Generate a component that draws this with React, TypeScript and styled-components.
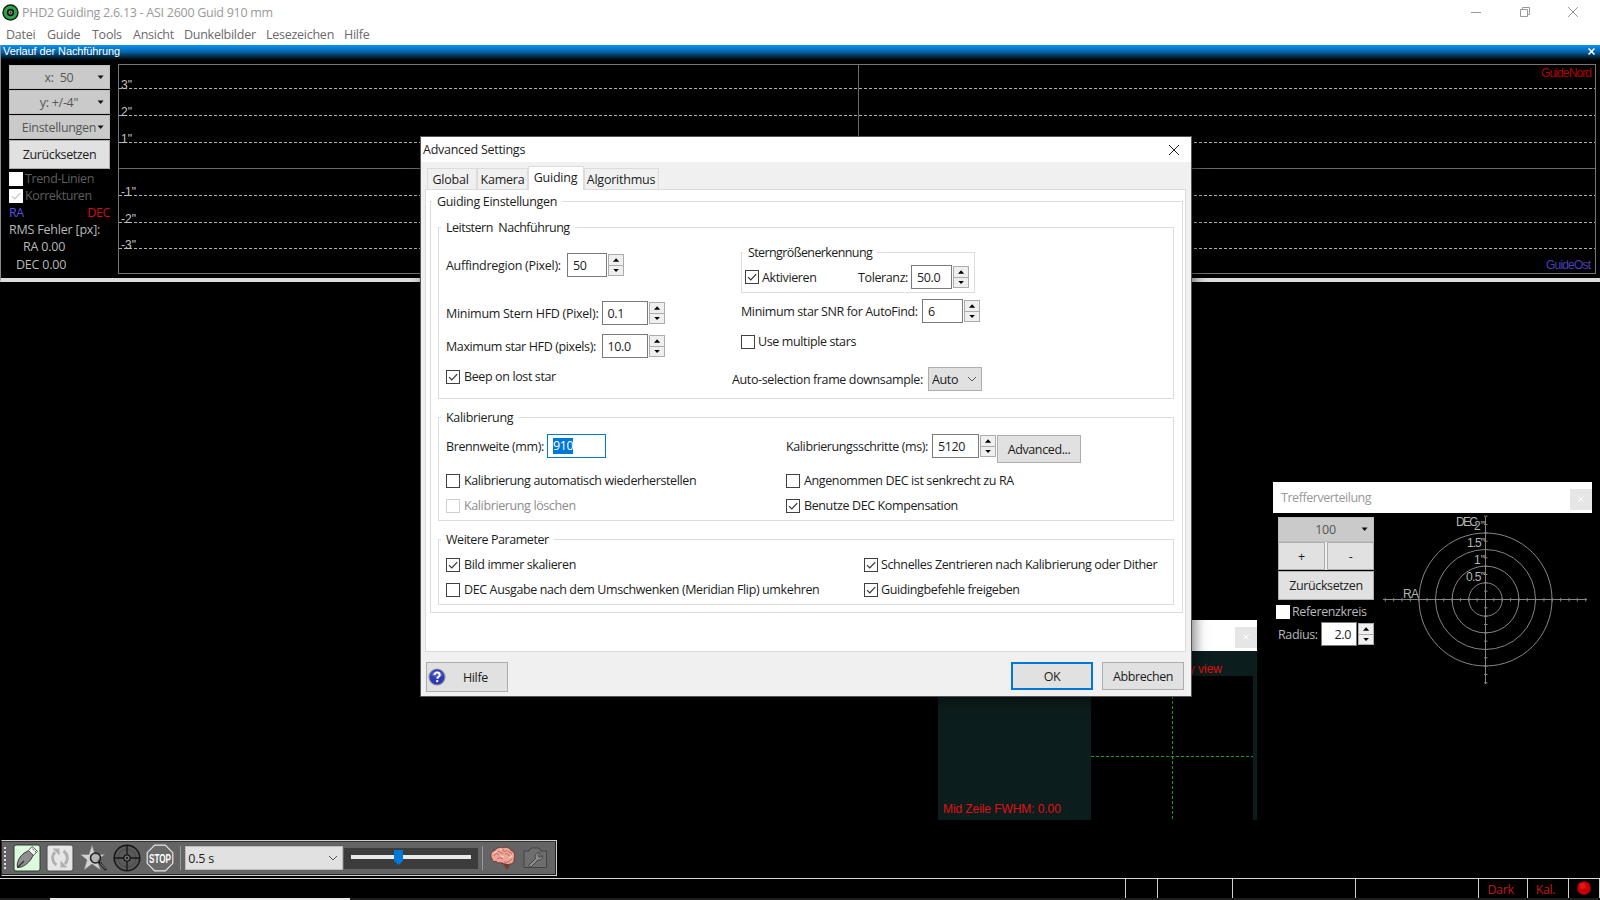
import React from "react";
import styled, { createGlobalStyle, css } from "styled-components";

const Global = createGlobalStyle`
  * { box-sizing: border-box; }
  html, body { margin: 0; background: #000; overflow: hidden; }
  body, button, input {
    font-family: "Open Sans", "Noto Sans", sans-serif;
    font-size: 12.5px;
    letter-spacing: -0.38px;
    line-height: 17px;
    color: #1c1c1c;
  }
  button { margin: 0; padding: 0; }
  svg { display: block; flex: none; }
`;

/* ---------- shared controls ---------- */

const Desktop = styled.div`
  position: relative;
  width: 1600px;
  height: 900px;
  background: #000;
  overflow: hidden;
  display: flex;
  flex-direction: column;
  white-space: pre;
`;

const Button = styled.button<{ $w: number; $h: number; $primary?: boolean }>`
  width: ${(p) => p.$w}px;
  height: ${(p) => p.$h}px;
  flex: none;
  display: flex;
  align-items: center;
  justify-content: center;
  background: #e1e1e1;
  border: ${(p) => (p.$primary ? "2px solid #0078d7" : "1px solid #adadad")};
`;

const BoxFrame = styled.span<{ $tone: "normal" | "disabled" | "bare" }>`
  width: 14px;
  height: 14px;
  flex: none;
  display: flex;
  align-items: center;
  justify-content: center;
  background: #fff;
  border: 1px solid
    ${(p) => (p.$tone === "normal" ? "#404040" : p.$tone === "disabled" ? "#d0d0d0" : "#fff")};
`;

const CheckRow = styled.label<{ $w?: number; $color?: string; $gap?: number }>`
  display: flex;
  align-items: center;
  gap: ${(p) => p.$gap ?? 4}px;
  height: 17px;
  flex: none;
  width: ${(p) => (p.$w ? p.$w + "px" : "auto")};
  color: ${(p) => p.$color ?? "inherit"};
`;

type CheckProps = {
  text: string;
  on?: boolean;
  w?: number;
  color?: string;
  gap?: number;
  tone?: "normal" | "disabled" | "bare";
};

function Check({ text, on, w, color, gap, tone = "normal" }: CheckProps) {
  return (
    <CheckRow $w={w} $color={color} $gap={gap}>
      <BoxFrame $tone={tone}>
        {on && (
          <svg width="12" height="12" viewBox="0 0 12 12">
            <path d="M2 6.2 4.8 9 10.2 3.2" fill="none" stroke={tone === "normal" ? "#333" : "#c4c4c4"} strokeWidth="1.2" />
          </svg>
        )}
      </BoxFrame>
      {text}
    </CheckRow>
  );
}

const SpinWrap = styled.span`
  display: flex;
  align-items: center;
  gap: 1px;
  flex: none;
`;

const Field = styled.span<{ $w: number; $focus?: boolean; $right?: boolean }>`
  width: ${(p) => p.$w}px;
  height: 24px;
  display: flex;
  align-items: center;
  padding: 0 5px;
  background: #fff;
  border: 1px solid ${(p) => (p.$focus ? "#0078d7" : "#7a7a7a")};
  ${(p) =>
    p.$right &&
    css`
      justify-content: flex-end;
    `}
`;

const Arrows = styled.span`
  width: 16px;
  height: 22px;
  display: grid;
  grid-template-rows: 1fr 1fr;
  background: #efefef;
  border: 1px solid #acacac;

  svg {
    place-self: center;
  }
  svg + svg {
    width: 14px;
    height: 10px;
    border-top: 1px solid #acacac;
  }
`;

function Spin({ value, w, right }: { value: string; w: number; right?: boolean }) {
  return (
    <SpinWrap>
      <Field $w={w} $right={right}>{value}</Field>
      <Arrows>
        <svg width="14" height="10" viewBox="0 0 14 10"><path d="M4 6.8h6.2L7.1 3.2z" fill="#000" /></svg>
        <svg viewBox="0 0 14 10"><path d="M4 3.2h6.2L7.1 6.8z" fill="#000" /></svg>
      </Arrows>
    </SpinWrap>
  );
}

const DropButton = styled.button<{ $h: number }>`
  height: ${(p) => p.$h}px;
  flex: none;
  display: grid;
  grid-template-columns: 1fr 12px;
  align-items: center;
  padding-left: 11px;
  background: #cacaca;
  border: 1px solid #bdbdbd;
  color: #565656;
  letter-spacing: -0.3px;
`;

const Caret = () => (
  <svg width="8" height="5" viewBox="0 0 8 5"><path d="M.6.6h6L3.6 4z" fill="#111" /></svg>
);

/* ---------- main window ---------- */

const TitleBar = styled.header`
  height: 24px;
  flex: none;
  background: #fff;
  color: #999;
  display: flex;
  align-items: center;
  gap: 3px;
  padding-left: 2px;
  letter-spacing: -0.27px;
`;

const WindowControls = styled.div`
  margin-left: auto;
  padding-right: 21px;
  display: flex;
  gap: 36.5px;
`;

const MenuBar = styled.nav`
  height: 21px;
  flex: none;
  background: #fff;
  color: #6a6a6a;
  display: flex;
  align-items: center;
  padding: 0 0 1px 6px;
  letter-spacing: -0.26px;
`;

const MenuItem = styled.span<{ $w: number }>`
  width: ${(p) => p.$w}px;
`;

const HistoryPanel = styled.section`
  height: 237px;
  flex: none;
  display: flex;
  flex-direction: column;
  border-left: 1px solid #8a8a8a;
  border-bottom: 4px solid #dcdcdc;
`;

const PanelCaption = styled.div`
  height: 15px;
  flex: none;
  display: flex;
  align-items: center;
  justify-content: space-between;
  padding: 0 5px 2px 2px;
  color: #fff;
  background: linear-gradient(#0b93f5, #0564a8 45%, #000);
  font: 11px/13px "Liberation Sans", sans-serif;
  letter-spacing: -0.1px;
`;

const PanelBody = styled.div`
  flex: 1;
  min-height: 0;
  display: flex;
  padding-top: 4px;
`;

const HistoryControls = styled.div`
  width: 117px;
  height: 213px;
  padding: 1px 8px 0;
  display: flex;
  flex-direction: column;
  overflow: hidden;
  color: #b9b9b9;

  ${DropButton} { margin-bottom: 1px; }
`;

const CheckSpace = styled.div`
  display: flex;
  flex-direction: column;
  margin-top: 1px;
`;

const AxisNames = styled.div`
  display: flex;
  justify-content: space-between;
  height: 17px;
  flex: none;
`;

const AxisName = styled.span<{ $c: string }>`
  color: ${(p) => p.$c};
`;

const Stat = styled.div<{ $indent: number }>`
  height: 17.4px;
  flex: none;
  padding-left: ${(p) => p.$indent}px;
  letter-spacing: -0.2px;
`;

const ChartText = styled.text`
  font-family: "Liberation Sans", sans-serif;
  font-size: 12px;
  letter-spacing: 0;
`;

const GRID: [number, string][] = [
  [24.5, '3"'],
  [51.5, '2"'],
  [78.5, '1"'],
  [131.5, '-1"'],
  [158.5, '-2"'],
  [184.5, '-3"'],
];

function HistoryChart() {
  return (
    <svg width="1478" height="211" viewBox="0 0 1478 211">
      <rect x=".5" y=".5" width="1477" height="209" fill="none" stroke="#757575" />
      <path d="M1 104.5H1477M740.5 1V209" stroke="#6a6a6a" />
      {GRID.map(([y, label]) => (
        <g key={label}>
          <path d={`M1 ${y}H1477`} stroke="#b0b0b0" strokeDasharray="3 2" />
          <ChartText x="3" y={y + 0.5} fill="#c4c4c4">{label}</ChartText>
        </g>
      ))}
      <ChartText x="1474" y="13" textAnchor="end" fill="#b00000" textLength="51">GuideNord</ChartText>
      <ChartText x="1473" y="205" textAnchor="end" fill="#4a3fb8" textLength="45">GuideOst</ChartText>
    </svg>
  );
}

/* ---------- settings dialog ---------- */

const Dialog = styled.section`
  position: absolute;
  left: 420px;
  top: 136px;
  width: 772px;
  height: 561px;
  display: flex;
  flex-direction: column;
  background: #f0f0f0;
  border: 1px solid #555;
  box-shadow: 3px 3px 12px rgba(0, 0, 0, 0.5);
`;

const DialogTitle = styled.header`
  height: 25px;
  flex: none;
  display: flex;
  align-items: center;
  justify-content: space-between;
  padding: 0 11px 0 2px;
  background: #fff;
  letter-spacing: -0.27px;
`;

const Tabs = styled.div`
  height: 27px;
  flex: none;
  display: flex;
  align-items: flex-end;
  padding-left: 6px;
`;

const Tab = styled.span<{ $w: number; $active?: boolean; $pr?: number }>`
  width: ${(p) => p.$w}px;
  height: 21px;
  display: flex;
  align-items: center;
  justify-content: center;
  padding-right: ${(p) => p.$pr ?? 0}px;
  letter-spacing: -0.22px;
  background: #f0f0f0;
  border: 1px solid #dcdcdc;
  border-bottom: 0;
  ${(p) =>
    p.$active &&
    css`
      position: relative;
      margin-bottom: -1px;
      height: 24px;
      padding-bottom: 2px;
      background: #fff;
    `}
`;

const Page = styled.div`
  width: 761px;
  height: 463px;
  margin-left: 4px;
  flex: none;
  padding: 2px 3px 0 4px;
  background: #fff;
  border: 1px solid #dcdcdc;
`;

const Group = styled.fieldset<{ $w: number; $h: number; $mt?: number; $pl?: number }>`
  width: ${(p) => p.$w}px;
  height: ${(p) => p.$h}px;
  min-width: 0;
  margin: ${(p) => p.$mt ?? 0}px 0 0;
  padding: 0 0 0 ${(p) => p.$pl ?? 7}px;
  border: 1px solid #dcdcdc;
`;

const Legend = styled.legend<{ $outdent?: number; $tight?: number }>`
  height: 18px;
  line-height: 19px;
  margin-left: ${(p) => -(p.$outdent ?? 5)}px;
  padding: 0 5px;
  letter-spacing: ${(p) => -(p.$tight ?? 0.32)}px;
`;

const Columns = styled.div`
  display: flex;
`;

const Column = styled.div<{ $w?: number }>`
  width: ${(p) => (p.$w ? p.$w + "px" : "auto")};
  flex: none;
  display: flex;
  flex-direction: column;
`;

const Row = styled.div<{ $mt: number; $indent?: number }>`
  display: flex;
  align-items: center;
  flex: none;
  margin-top: ${(p) => p.$mt}px;
  margin-left: ${(p) => p.$indent ?? 0}px;
`;

const Label = styled.span<{ $w: number; $loose?: boolean }>`
  width: ${(p) => p.$w}px;
  flex: none;
  ${(p) =>
    p.$loose &&
    css`
      letter-spacing: -0.28px;
    `}
`;

const Selected = styled.span`
  background: #0078d7;
  color: #fff;
  line-height: 16px;
`;

const Combo = styled.button`
  width: 54px;
  height: 24px;
  display: flex;
  align-items: center;
  justify-content: space-between;
  padding: 0 4px 0 3px;
  background: #e1e1e1;
  border: 1px solid #adadad;
`;

const Chevron = () => (
  <svg width="10" height="6" viewBox="0 0 10 6"><path d="M1 1l4 4 4-4" fill="none" stroke="#555" /></svg>
);

const AdvancedSlot = styled.span`
  height: 24px;
  margin-left: 1px;
  padding-top: 1px;
`;

const DialogFooter = styled.footer`
  display: flex;
  align-items: flex-start;
  padding: 10px 7px 0 5px;
  gap: 9px;
`;

const HelpButton = styled.button`
  width: 82px;
  height: 30px;
  margin-right: auto;
  display: flex;
  align-items: center;
  gap: 17px;
  padding-left: 1px;
  background: #e1e1e1;
  border: 1px solid #adadad;
`;

function SettingsDialog() {
  return (
    <Dialog>
      <DialogTitle>
        Advanced Settings
        <svg width="12" height="12" viewBox="0 0 12 12"><path d="M1 1l10 10M11 1L1 11" stroke="#222" /></svg>
      </DialogTitle>
      <Tabs>
        <Tab $w={50} $pr={3}>Global</Tab>
        <Tab $w={51}>Kamera</Tab>
        <Tab $w={56} $active $pr={1}>Guiding</Tab>
        <Tab $w={75} $pr={1}>Algorithmus</Tab>
      </Tabs>
      <Page>
        <Group $w={753} $h={421}>
          <Legend $outdent={6}>Guiding Einstellungen</Legend>
          <Group $w={736} $h={181} $mt={8}>
            <Legend $tight={0.5}>Leitstern  Nachführung</Legend>
            <Columns>
              <Column $w={285}>
                <Row $mt={17}><Label $w={121} $loose>Auffindregion (Pixel):</Label><Spin value="50" w={40} /></Row>
                <Row $mt={24}><Label $w={155.500} $loose>Minimum Stern HFD (Pixel):</Label><Spin value="0.1" w={46} /></Row>
                <Row $mt={9}><Label $w={155.500}>Maximum star HFD (pixels):</Label><Spin value="10.0" w={46} /></Row>
                <Row $mt={10}><Check on text="Beep on lost star" /></Row>
              </Column>
              <Column>
                <Row $mt={7} $indent={10}>
                  <Group $w={234} $h={50} $pl={3}>
                    <Legend $outdent={2} $tight={0.6}>Sterngrößenerkennung</Legend>
                    <Row $mt={4}>
                      <Check on text="Aktivieren" w={113} gap={3} />
                      <Label $w={53}>Toleranz:</Label>
                      <Spin value="50.0" w={41} />
                    </Row>
                  </Group>
                </Row>
                <Row $mt={6} $indent={10}><Label $w={181}>Minimum star SNR for AutoFind:</Label><Spin value="6" w={41} /></Row>
                <Row $mt={10} $indent={10}><Check text="Use multiple stars" gap={3} /></Row>
                <Row $mt={17} $indent={1}>
                  <Label $w={196}>Auto-selection frame downsample:</Label>
                  <Combo>Auto<Chevron /></Combo>
                </Row>
              </Column>
            </Columns>
          </Group>
          <Group $w={736} $h={113} $mt={9}>
            <Legend>Kalibrierung</Legend>
            <Columns>
              <Column $w={340}>
                <Row $mt={8}><Label $w={101}>Brennweite (mm):</Label><Field $w={59} $focus><Selected>910</Selected></Field></Row>
                <Row $mt={14}><Check text="Kalibrierung automatisch wiederherstellen" /></Row>
                <Row $mt={8}><Check tone="disabled" color="#8c8c8c" text="Kalibrierung löschen" /></Row>
              </Column>
              <Column>
                <Row $mt={8}>
                  <Label $w={146}>Kalibrierungsschritte (ms):</Label>
                  <Spin value="5120" w={47} />
                  <AdvancedSlot><Button $w={84} $h={28}>Advanced...</Button></AdvancedSlot>
                </Row>
                <Row $mt={14}><Check text="Angenommen DEC ist senkrecht zu RA" /></Row>
                <Row $mt={8}><Check on text="Benutze DEC Kompensation" /></Row>
              </Column>
            </Columns>
          </Group>
          <Group $w={736} $h={75} $mt={9}>
            <Legend $tight={0.45}>Weitere Parameter</Legend>
            <Columns>
              <Column $w={418}>
                <Row $mt={8}><Check on text="Bild immer skalieren" /></Row>
                <Row $mt={8}><Check text="DEC Ausgabe nach dem Umschwenken (Meridian Flip) umkehren" /></Row>
              </Column>
              <Column>
                <Row $mt={8}><Check on gap={3} text="Schnelles Zentrieren nach Kalibrierung oder Dither" /></Row>
                <Row $mt={8}><Check on gap={3} text="Guidingbefehle freigeben" /></Row>
              </Column>
            </Columns>
          </Group>
        </Group>
      </Page>
      <DialogFooter>
        <HelpButton>
          <svg width="18" height="18" viewBox="0 0 18 18">
            <circle cx="9" cy="9" r="8.6" fill="#8d90a8" />
            <circle cx="9" cy="9" r="7.4" fill="#2f3bb5" />
            <path d="M3 7.5a6.3 6.3 0 0 1 12 0q-6 3-12 0z" fill="#6f78dc" opacity=".6" />
            <path d="M6.4 7.1C6.4 3.7 11.7 3.9 11.7 7c0 1.9-2.4 1.8-2.5 3.8" fill="none" stroke="#fff" strokeWidth="2" />
            <circle cx="9.2" cy="13.1" r="1.2" fill="#fff" />
          </svg>
          Hilfe
        </HelpButton>
        <Button $w={82} $h={28} $primary>OK</Button>
        <Button $w={82} $h={28}>Abbrechen</Button>
      </DialogFooter>
    </Dialog>
  );
}

/* ---------- target window ---------- */

const TargetWindow = styled.section`
  position: absolute;
  left: 1273px;
  top: 482px;
  width: 319px;
  height: 206px;
  color: #b9b9b9;
`;

const FloatTitle = styled.header`
  height: 31px;
  flex: none;
  display: flex;
  align-items: center;
  justify-content: space-between;
  padding: 0 0 0 8px;
  background: #fff;
  color: #999;
  letter-spacing: -0.45px;
`;

const FloatClose = styled.span`
  width: 22px;
  height: 21px;
  margin-top: 3px;
  display: grid;
  place-items: center;
  background: #e6e6e6;
`;

const CloseMark = () => (
  <svg width="6" height="6" viewBox="0 0 6 6"><path d="M.5.5l5 5M5.5.5l-5 5" stroke="#fff" /></svg>
);

const TargetBody = styled.div`
  display: flex;
`;

const TargetControls = styled.div`
  width: 101px;
  padding: 4px 0 0 5px;
  display: flex;
  flex-direction: column;
`;

const Pair = styled.div`
  display: flex;
  justify-content: space-between;
  width: 96px;
  margin-bottom: 1px;
  background: #efefef;
`;

const RefCheck = styled.div`
  margin: 3px 0 2px -2px;
`;

const DarkSpin = styled.span`
  color: #1c1c1c;
`;

function TargetPlot() {
  const cx = 111.5;
  const cy = 86.5;
  const ticks = Array.from({ length: 25 }, (_, i) => i - 12).filter((i) => i !== 0);
  return (
    <svg width="218" height="175" viewBox="0 0 218 175">
      <g fill="none" stroke="#858585">
        {[16.7, 33.4, 50, 66.5].map((r) => (
          <circle key={r} cx={cx} cy={cy} r={r} />
        ))}
        <path d={`M9 ${cy}H213M${cx} 4V171`} />
        {ticks.map((i) => (
          <path key={"x" + i} d={`M${cx + i * 8.35} ${cy - 1.5}v3.5`} />
        ))}
        {ticks.filter((i) => Math.abs(i) <= 10).map((i) => (
          <path key={"y" + i} d={`M${cx - 1.5} ${cy + i * 8.33}h3.5`} />
        ))}
      </g>
      <g fill="#b5b5b5">
        <ChartText x="82" y="13" textLength="22">DEC</ChartText>
        <ChartText x="111" y="17" textAnchor="end">2"</ChartText>
        <ChartText x="111" y="34" textAnchor="end" textLength="18">1.5"</ChartText>
        <ChartText x="111" y="51" textAnchor="end">1"</ChartText>
        <ChartText x="111" y="67.5" textAnchor="end" textLength="19">0.5"</ChartText>
        <ChartText x="29" y="85" textLength="16">RA</ChartText>
      </g>
    </svg>
  );
}

/* ---------- star profile window ---------- */

const ProfileWindow = styled.section`
  position: absolute;
  left: 938px;
  top: 620px;
  width: 319px;
  height: 200px;
  display: flex;
  flex-direction: column;
  background: #0b1d1c;
  color: #e01010;
  font: 12px/14px "Liberation Sans", sans-serif;
  letter-spacing: 0;
`;

const ProfileHead = styled.div`
  height: 25px;
  flex: none;
  padding: 11px 35px 0 0;
  text-align: right;
`;

const ProfileBody = styled.div`
  flex: 1;
  display: flex;
`;

const ProfileGraph = styled.div`
  width: 153px;
  padding: 0 0 4px 5px;
  display: flex;
  align-items: flex-end;
  letter-spacing: -0.08px;
`;

/* ---------- toolbar and status bar ---------- */

const BottomArea = styled.div`
  margin-top: auto;
  height: 60px;
  display: flex;
  flex-direction: column;
`;

const Toolbar = styled.div`
  width: 556px;
  height: 36px;
  margin-left: 1px;
  display: flex;
  align-items: center;
  background: #646464;
  border: 1px solid #cfcfcf;
  border-left-color: #222;
  box-shadow: inset -1px -1px 0 #222, inset 0 1px 0 #333;
`;

const Grip = styled.div`
  width: 2px;
  height: 23px;
  margin: 0 7px 0 2px;
  background: repeating-linear-gradient(#ddd 0 2px, transparent 2px 4px);
`;

const Tools = styled.div`
  display: flex;
  gap: 5.3px;
`;

const Divider = styled.div<{ $ml: number; $mr: number }>`
  width: 1px;
  height: 24px;
  margin: 0 ${(p) => p.$mr}px 0 ${(p) => p.$ml}px;
  background: #9a9a9a;
`;

const ExposureSelect = styled.div`
  width: 158px;
  height: 24px;
  display: flex;
  align-items: center;
  justify-content: space-between;
  padding: 0 4px 0 2px;
  background: #e1e1e1;
  border: 1px solid #bbb;
  letter-spacing: -0.2px;
`;

const SliderWell = styled.div`
  width: 134px;
  height: 21px;
  margin-left: 1px;
  padding: 7px 7px 0;
  background: #3c3c3c;
`;

const Track = styled.div`
  position: relative;
  height: 4px;
  background: #e8eaea;

  svg {
    position: absolute;
    left: 43px;
    top: -5px;
  }
`;

const StatusBar = styled.footer`
  margin-top: 2px;
  height: 20px;
  display: flex;
  border-top: 1px solid #d8d8d8;
`;

const StatusCell = styled.div<{ $w: number }>`
  width: ${(p) => p.$w}px;
  height: 19px;
  display: flex;
  align-items: center;
  justify-content: center;
  padding: 2px 5px 0 0;
  color: #c01818;
  border-right: 1px solid #d0d0d0;

  svg {
    margin: -4px -4px 0 0;
  }
`;

const BottomEdge = styled.div`
  height: 2px;
  background: linear-gradient(90deg, #1c1c1c 50px, #e8e8e8 50px 350px, #1c1c1c 350px);
`;

const STATUS: { w: number; content?: React.ReactNode }[] = [
  { w: 1126 },
  { w: 32 },
  { w: 75 },
  { w: 123 },
  { w: 123 },
  { w: 49, content: "Dark" },
  { w: 41, content: "Kal." },
  {
    w: 31,
    content: (
      <svg width="14" height="14" viewBox="0 0 14 14">
        <circle cx="7" cy="7" r="6.8" fill="#c80000" />
        <circle cx="5.5" cy="5" r="3" fill="#e01818" />
      </svg>
    ),
  },
];

const StopText = styled.text`
  font: bold 13.5px "Liberation Sans", sans-serif;
  letter-spacing: 0;
  fill: #fff;
`;

function ToolIcons() {
  return (
    <Tools>
      <svg width="28" height="28" viewBox="0 0 28 28">
        <rect x="1" y="1" width="26" height="26" rx="2" fill="#dcfadc" stroke="#2d3b2d" />
        <path d="M4.500 23.500C3.500 19 6 13.500 9.500 10.500c2-2 4-2.500 6-4l5 4.500c-1.500 2-2 4-4 6-3 3.500-7 6.500-12 6.500z" fill="#8f8f8f" stroke="#333" />
        <path d="M4.500 23.500L11 17" stroke="#333" strokeWidth="1.500" />
        <path d="M15.500 6.500l3.500-4 5.500 4.800-4 4z" fill="#fff" stroke="#555" />
        <path d="M19.500 5l1.300 1.200M21.800 7l1.200 1.200" stroke="#333" />
      </svg>
      <svg width="28" height="28" viewBox="0 0 28 28">
        <rect x="1" y="1" width="26" height="26" rx="2" fill="#e6e6e6" stroke="#4a4a4a" />
        <path d="M10.500 21a8.500 8.500 0 0 1-1.500-13M17.500 7a8.500 8.500 0 0 1 1.500 13" fill="none" stroke="#b0b0b0" strokeWidth="2.800" />
        <path d="M6.500 4.500h7v7zM21.500 23.500h-7v-7z" fill="#b0b0b0" />
      </svg>
      <svg width="28" height="28" viewBox="0 0 28 28">
        <path d="M12 1l3 9.500h10l-8 5.500 3.500 10L12 20l-8 6 3-10-6.500-5.500H9z" fill="#d2d2d2" stroke="#777" strokeWidth=".5" />
        <circle cx="15.500" cy="14" r="5" fill="#aaa" fillOpacity=".7" stroke="#222" strokeWidth="1.600" />
        <path d="M19 18l7 8" stroke="#222" strokeWidth="2.600" />
        <path d="M20.500 19.500l5 5.500" stroke="#aaa" strokeWidth=".7" />
      </svg>
      <svg width="28" height="28" viewBox="0 0 28 28">
        <circle cx="14" cy="14" r="12.800" fill="#5a5a5a" stroke="#161616" strokeWidth="1.500" />
        <circle cx="14" cy="14" r="9" fill="none" stroke="#484848" />
        <path d="M14 1v26M1 14h26" stroke="#161616" strokeWidth="1.300" />
        <circle cx="14" cy="14" r="3.200" fill="#707070" stroke="#161616" strokeWidth="1.300" />
        <circle cx="14" cy="14" r="1.100" fill="#161616" />
      </svg>
      <svg width="28" height="28" viewBox="0 0 28 28">
        <path d="M8.700 1.200h10.600l7.500 7.500v10.600l-7.500 7.500H8.700l-7.500-7.500V8.700z" fill="#6a6a6a" stroke="#e8e8e8" strokeWidth="1.200" />
        <StopText x="3" y="19" textLength="22" lengthAdjust="spacingAndGlyphs">STOP</StopText>
      </svg>
    </Tools>
  );
}

const RightTools = styled.div`
  display: flex;
  align-items: center;
  gap: 7px;
`;

const MENU: [string, number][] = [
  ["Datei", 41],
  ["Guide", 45],
  ["Tools", 41],
  ["Ansicht", 51],
  ["Dunkelbilder", 82],
  ["Lesezeichen", 78],
  ["Hilfe", 40],
];

export default function App() {
  return (
    <Desktop>
      <Global />
      <TitleBar>
        <svg width="17" height="17" viewBox="0 0 17 17">
          <circle cx="8.500" cy="8.500" r="8.200" fill="#0d2414" />
          <circle cx="8.500" cy="8.500" r="6.800" fill="#35a04c" />
          <circle cx="8.500" cy="8.500" r="3.700" fill="#0a1a10" />
          <circle cx="8.500" cy="8.500" r="2" fill="#8fa898" />
          <circle cx="8.500" cy="8.500" r=".9" fill="#111" />
        </svg>
        PHD2 Guiding 2.6.13 - ASI 2600 Guid 910 mm
        <WindowControls>
          <svg width="12" height="12" viewBox="0 0 12 12"><path d="M1 6.500h10" stroke="#999" /></svg>
          <svg width="12" height="12" viewBox="0 0 12 12"><path d="M1.500 3.500h7v7h-7zM3.500 3.500v-2h7v7h-2" fill="none" stroke="#999" /></svg>
          <svg width="12" height="12" viewBox="0 0 12 12"><path d="M1 1l10 10M11 1L1 11" stroke="#999" /></svg>
        </WindowControls>
      </TitleBar>
      <MenuBar>
        {MENU.map(([name, w]) => (
          <MenuItem key={name} $w={w}>{name}</MenuItem>
        ))}
      </MenuBar>
      <HistoryPanel>
        <PanelCaption>
          Verlauf der Nachführung
          <svg width="7" height="7" viewBox="0 0 7 7"><path d="M.5.5l6 6M6.500.5l-6 6" stroke="#fff" strokeWidth="1.500" /></svg>
        </PanelCaption>
        <PanelBody>
          <HistoryControls>
            <DropButton $h={24}>x:  50<Caret /></DropButton>
            <DropButton $h={24}>y: +/-4"<Caret /></DropButton>
            <DropButton $h={24}>Einstellungen<Caret /></DropButton>
            <Button $w={101} $h={29}>Zurücksetzen</Button>
            <CheckSpace>
              <Check tone="bare" color="#5e5e5e" gap={2} text="Trend-Linien" />
              <Check tone="bare" on color="#5e5e5e" gap={2} text="Korrekturen" />
            </CheckSpace>
            <AxisNames><AxisName $c="#5a50e0">RA</AxisName><AxisName $c="#d01010">DEC</AxisName></AxisNames>
            <Stat $indent={0}>RMS Fehler [px]:</Stat>
            <Stat $indent={14}>RA 0.00</Stat>
            <Stat $indent={7}>DEC 0.00</Stat>
            <Stat $indent={12}>Tot 0.00</Stat>
          </HistoryControls>
          <HistoryChart />
        </PanelBody>
      </HistoryPanel>

      <ProfileWindow>
        <FloatTitle><span /><FloatClose><CloseMark /></FloatClose></FloatTitle>
        <ProfileHead>y view</ProfileHead>
        <ProfileBody>
          <ProfileGraph>Mid Zeile FWHM: 0.00</ProfileGraph>
          <svg width="162" height="144" viewBox="0 0 162 144">
            <rect width="162" height="144" fill="#000" />
            <path d="M0 80.500H162M81.500 0V144" stroke="#1f9a1f" strokeDasharray="3 2" />
          </svg>
        </ProfileBody>
      </ProfileWindow>

      <TargetWindow>
        <FloatTitle>Trefferverteilung<FloatClose><CloseMark /></FloatClose></FloatTitle>
        <TargetBody>
          <TargetControls>
            <DropButton $h={25}>100<Caret /></DropButton>
            <Pair><Button $w={47} $h={28}>+</Button><Button $w={47} $h={28}>-</Button></Pair>
            <Button $w={96} $h={29}>Zurücksetzen</Button>
            <RefCheck><Check tone="bare" gap={2} text="Referenzkreis" /></RefCheck>
            <Row $mt={0}><Label $w={43}>Radius:</Label><DarkSpin><Spin value="2.0" w={36} right /></DarkSpin></Row>
          </TargetControls>
          <TargetPlot />
        </TargetBody>
      </TargetWindow>

      <SettingsDialog />

      <BottomArea>
        <Toolbar>
          <Grip />
          <ToolIcons />
          <Divider $ml={6} $mr={4} />
          <ExposureSelect>0.5 s<Chevron /></ExposureSelect>
          <SliderWell>
            <Track>
              <svg width="9" height="15" viewBox="0 0 9 15"><path d="M0 0h9v11l-4.500 4L0 11z" fill="#0078d7" /></svg>
            </Track>
          </SliderWell>
          <Divider $ml={4} $mr={7} />
          <RightTools>
            <svg width="26" height="24" viewBox="0 0 26 24">
              <path d="M2 13C-.5 9 1.500 5 5 4.500 6.500 1.500 10 1 12.500 1.800 16 .3 20 2 21 4.500c3.500 1 4.500 5 3 8 .5 4-2 6-5 5.500l-1 4.500-2-.5-3-5c-4-.5-5 .5-6.500-1.500C4 15.800 2.500 15 2 13z" fill="#eda597" stroke="#6a2a22" strokeWidth=".8" />
              <path d="M4 10c1-3 4-3 5-1M8 5c1 2 4 1 5 3M13 3c-1 3 3 3 4 1M15 8c2-1 4 0 4 2M7 13c2-2 4-1 6 0M18 5c1 2 3 1 4 3M14 16c2 1 5 0 8-3" fill="none" stroke="#b95f54" strokeWidth=".9" />
              <path d="M4 7l3-2M10 4l2-1M11 10l3 1M19 12l3-2" stroke="#ffe0d8" />
              <path d="M13 17l4 6 2.500-4.500z" fill="#6b3a2c" />
            </svg>
            <svg width="25" height="22" viewBox="0 0 25 22">
              <path d="M1 4h5l2-3h8l2 3h5.500v16.500H1z" fill="#6e6e6e" stroke="#424242" />
              <path d="M6 18l6.500-6.500c-1.500-4 1.500-6.500 5-5.500l-2.500 2.500 1.500 2 3-2c.5 4-2 5-4.500 4.500L8.500 19.500c-1.500 1-3.500-.2-2.500-1.500z" fill="#8c8c8c" stroke="#3c3c3c" strokeWidth=".9" />
            </svg>
          </RightTools>
        </Toolbar>
        <StatusBar>
          {STATUS.map((cell, i) => (
            <StatusCell key={i} $w={cell.w}>{cell.content}</StatusCell>
          ))}
        </StatusBar>
        <BottomEdge />
      </BottomArea>
    </Desktop>
  );
}
